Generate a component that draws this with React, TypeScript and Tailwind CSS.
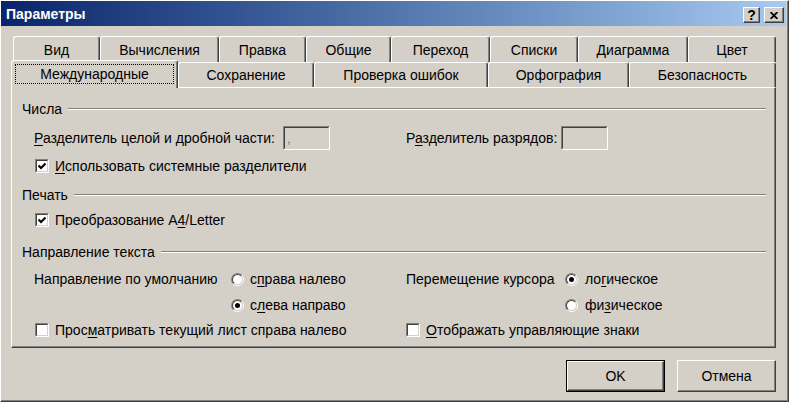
import React from 'react';

// Excel 2003 "Параметры" dialog, International tab, Windows Classic look

const topTabs = [
  { label: 'Вид', w: 'w-[87px]' },
  { label: 'Вычисления', w: 'w-[119px]' },
  { label: 'Правка', w: 'w-[87px]' },
  { label: 'Общие', w: 'w-[85px]' },
  { label: 'Переход', w: 'w-[99px]' },
  { label: 'Списки', w: 'w-[88px]' },
  { label: 'Диаграмма', w: 'w-[110px]' },
  { label: 'Цвет', w: 'w-[88px]' },
];

const bottomTabs = [
  { label: 'Сохранение', w: 'w-[136px]' },
  { label: 'Проверка ошибок', w: 'w-[174px]' },
  { label: 'Орфография', w: 'w-[141px]' },
  { label: 'Безопасность', w: 'w-[147px]' },
];

const U = ({ children }: { children: React.ReactNode }) => (
  <span className="underline decoration-1 underline-offset-[2px]">{children}</span>
);

const Tab = ({ label, w }: { label: string; w: string }) => (
  <div
    className={`${w} h-full shrink-0 flex items-center justify-center border-t border-l border-r border-t-white border-l-white border-r-[#404040] rounded-t-[3px] shadow-[inset_-1px_0_0_#808080]`}
  >
    {label}
  </div>
);

const GroupHeader = ({ title }: { title: string }) => (
  <div className="flex h-[16px] items-center">
    <span>{title}</span>
    <div className="ml-[6px] h-[2px] flex-1 border-t border-b border-t-[#808080] border-b-white" />
  </div>
);

const Checkbox = ({ checked }: { checked?: boolean }) => (
  <div className="h-[14px] w-[14px] shrink-0 border border-t-[#808080] border-l-[#808080] border-r-white border-b-white">
    <div className="flex h-full w-full items-center justify-center border border-t-[#404040] border-l-[#404040] border-r-[#d4d0c8] border-b-[#d4d0c8] bg-white">
      {checked && (
        <svg width="8" height="8" viewBox="0 0 8 8">
          <path d="M0.5 3.5 L3 6 L7.5 1.5" stroke="#000" strokeWidth="2" fill="none" />
        </svg>
      )}
    </div>
  </div>
);

const Radio = ({ checked }: { checked?: boolean }) => (
  <div className="h-[13px] w-[13px] shrink-0 rounded-full border border-t-[#808080] border-l-[#808080] border-r-white border-b-white">
    <div className="flex h-full w-full items-center justify-center rounded-full border border-t-[#404040] border-l-[#404040] border-r-[#d4d0c8] border-b-[#d4d0c8] bg-white">
      {checked && <div className="h-[5px] w-[5px] rounded-full bg-black" />}
    </div>
  </div>
);

const TextBox = ({ value }: { value?: string }) => (
  <div className="h-[24px] w-[47px] shrink-0 border border-t-[#808080] border-l-[#808080] border-r-white border-b-white">
    <div className="flex h-full w-full items-center border border-t-[#404040] border-l-[#404040] border-r-[#d4d0c8] border-b-[#d4d0c8] bg-[#d4d0c8] pl-[2px] text-[#808080]">
      {value}
    </div>
  </div>
);

const Button = ({ label, isDefault }: { label: string; isDefault?: boolean }) => (
  <div className={`h-[32px] w-[99px] ${isDefault ? 'border border-black' : ''}`}>
    <div className="flex h-full w-full items-center justify-center border border-t-white border-l-white border-r-[#404040] border-b-[#404040] shadow-[inset_-1px_-1px_0_#808080]">
      {label}
    </div>
  </div>
);

export default function App() {
  return (
    <div className="h-[402px] w-[789px] overflow-hidden border border-t-white border-l-white border-r-[#404040] border-b-[#404040] bg-[#d4d0c8] pr-[2px] font-['Liberation_Sans',sans-serif] text-[14px] leading-none text-black shadow-[inset_-1px_-1px_0_#808080]">
      {/* title bar */}
      <div className="flex h-[25px] items-center bg-gradient-to-r from-[#0a246a] to-[#a6caf0] pl-[5px] pr-[2px]">
        <span className="text-[14px] font-bold text-white">Параметры</span>
        <div className="ml-auto mt-[3px] flex gap-[4px]">
          <div className="flex h-[16px] w-[17px] items-center justify-center border border-t-white border-l-white border-r-[#404040] border-b-[#404040] bg-[#d4d0c8] text-[14px] font-bold shadow-[inset_-1px_-1px_0_#808080]">
            ?
          </div>
          <div className="flex h-[16px] w-[20px] items-center justify-center border border-t-white border-l-white border-r-[#404040] border-b-[#404040] bg-[#d4d0c8] shadow-[inset_-1px_-1px_0_#808080]">
            <svg width="8" height="7" viewBox="0 0 8 7">
              <path d="M0.5 0 L7.5 7 M7.5 0 L0.5 7" stroke="#000" strokeWidth="1.8" />
            </svg>
          </div>
        </div>
      </div>

      <div className="ml-[10px] w-[765px]">
        {/* tabs */}
        <div className="mt-[10px] ml-[2px] flex h-[26px]">
          {topTabs.map((t) => (
            <Tab key={t.label} label={t.label} w={t.w} />
          ))}
        </div>
        <div className="flex h-[25px]">
          <div className="relative z-10 -mt-[2px] h-[28px] w-[167px] shrink-0 rounded-t-[3px] border-t border-l border-r border-t-white border-l-white border-r-[#404040] bg-[#d4d0c8] px-[3px] pt-[3px] shadow-[inset_-1px_0_0_#808080]">
            <div className="flex h-[20px] items-center justify-center border border-dotted border-black">
              Международные
            </div>
          </div>
          {bottomTabs.map((t) => (
            <Tab key={t.label} label={t.label} w={t.w} />
          ))}
        </div>

        {/* page */}
        <div className="flex h-[261px] flex-col border border-t-white border-l-white border-r-[#404040] border-b-[#404040] pl-[10px] pr-[9px] shadow-[inset_-1px_-1px_0_#808080]">
          <div className="mt-[13px]">
            <GroupHeader title="Числа" />
          </div>
          <div className="mt-[9px] ml-[12px] flex h-[24px] items-center">
            <div className="flex w-[372px] items-center">
              <span className="w-[249px]">
                <U>Р</U>азделитель целой и дробной части:
              </span>
              <TextBox value="," />
            </div>
            <div className="flex items-center">
              <span className="w-[155px]">
                Р<U>а</U>зделитель разрядов:
              </span>
              <TextBox />
            </div>
          </div>
          <div className="mt-[8px] ml-[13px] flex h-[16px] items-center gap-[6px]">
            <Checkbox checked />
            <span>
              <U>И</U>спользовать системные разделители
            </span>
          </div>

          <div className="mt-[13px]">
            <GroupHeader title="Печать" />
          </div>
          <div className="mt-[9px] ml-[13px] flex h-[16px] items-center gap-[6px]">
            <Checkbox checked />
            <span>
              Преобразование A<U>4</U>/Letter
            </span>
          </div>

          <div className="mt-[16px]">
            <GroupHeader title="Направление текста" />
          </div>
          <div className="mt-[11px] ml-[12px] flex h-[16px] items-center">
            <div className="flex w-[372px] items-center">
              <span className="w-[197px]">Направление по умолчанию</span>
              <Radio />
              <span className="ml-[6px]">
                с<U>п</U>рава налево
              </span>
            </div>
            <div className="flex items-center">
              <span className="w-[159px]">Перемещение курсора</span>
              <Radio checked />
              <span className="ml-[7px]">
                ло<U>г</U>ическое
              </span>
            </div>
          </div>
          <div className="mt-[10px] ml-[12px] flex h-[16px] items-center">
            <div className="flex w-[372px] items-center pl-[197px]">
              <Radio checked />
              <span className="ml-[6px]">
                с<U>л</U>ева направо
              </span>
            </div>
            <div className="flex items-center pl-[159px]">
              <Radio />
              <span className="ml-[7px]">
                фи<U>з</U>ическое
              </span>
            </div>
          </div>
          <div className="mt-[9px] ml-[13px] flex h-[16px] items-center">
            <div className="flex w-[371px] items-center gap-[6px]">
              <Checkbox />
              <span>
                Прос<U>м</U>атривать текущий лист справа налево
              </span>
            </div>
            <div className="flex items-center gap-[6px]">
              <Checkbox />
              <span>
                <U>О</U>тображать управляющие знаки
              </span>
            </div>
          </div>
        </div>

        {/* buttons */}
        <div className="mt-[12px] flex justify-end gap-[12px]">
          <Button label="OK" isDefault />
          <Button label="Отмена" />
        </div>
      </div>
    </div>
  );
}
